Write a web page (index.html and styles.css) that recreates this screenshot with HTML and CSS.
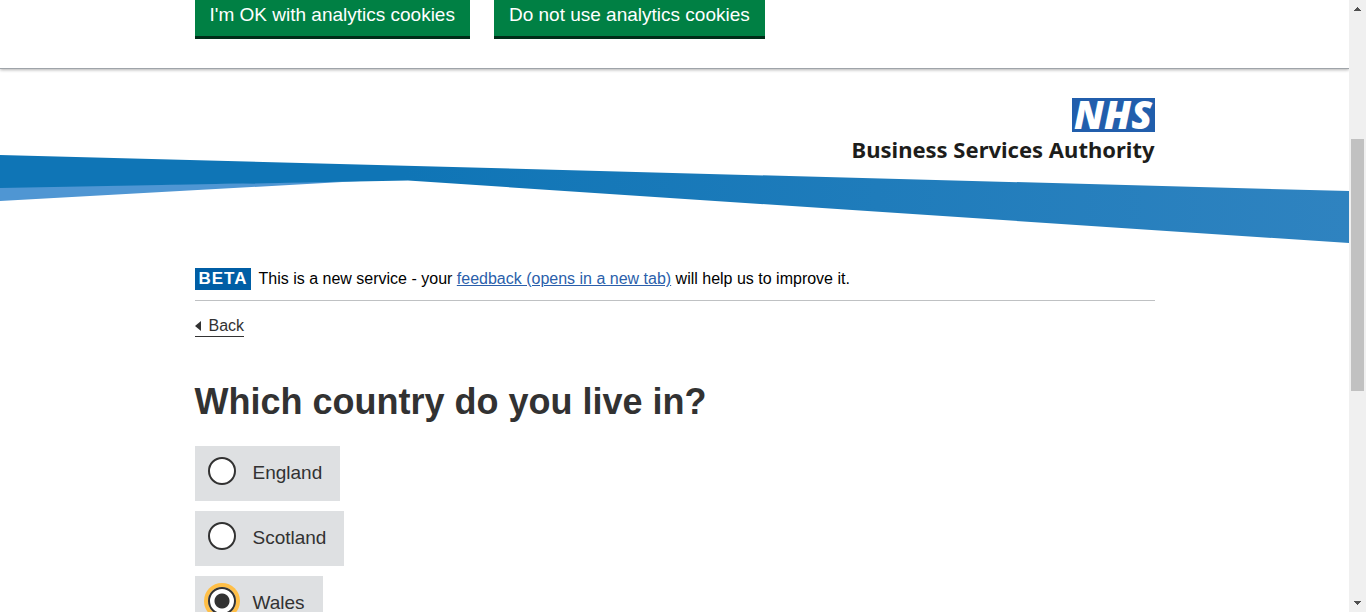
FILE: index.html
```html
<!DOCTYPE html>
<html lang="en">
<head>
<meta charset="utf-8">
<meta name="viewport" content="width=device-width, initial-scale=1">
<title>Which country do you live in?</title>
<link rel="stylesheet" href="styles.css">
</head>
<body>
<div class="window">
  <div class="page">
    <section class="cookie-banner" aria-label="Cookies">
      <div class="container cookie-actions">
        <button class="button" type="button">I'm OK with analytics cookies</button>
        <button class="button" type="button">Do not use analytics cookies</button>
      </div>
    </section>
    <header class="header">
      <svg class="swoosh" viewBox="0 0 1349 88" preserveAspectRatio="none" aria-hidden="true">
        <defs>
          <linearGradient id="band" x1="0" x2="1" y1="0" y2="0">
            <stop offset="0.3" stop-color="#0f75b6"/>
            <stop offset="1" stop-color="#2f83c0"/>
          </linearGradient>
        </defs>
        <path fill="#4f96d3" d="M0 32L360 26L0 46Z"/>
        <path fill="url(#band)" d="M0 0L1349 36V88L408 25.500L330 27L0 33Z"/>
      </svg>
      <div class="container brand">
        <svg class="nhs" viewBox="0 0 83 34" role="img" aria-label="NHS">
          <rect width="83" height="34" fill="#215eac"/>
          <text class="nhs-text" x="41" y="31" text-anchor="middle">NHS</text>
        </svg>
        <span class="brand-name">Business Services Authority</span>
      </div>
    </header>
    <main class="container">
      <div class="phase-banner">
        <strong class="tag">BETA</strong>
        <span>This is a new service - your <a class="link" href="#feedback">feedback (opens in a new tab)</a> will help us to improve it.</span>
      </div>
      <a class="back" href="#back"><svg class="back-arrow" viewBox="0 0 6 10" aria-hidden="true"><path d="M6 0V10L0 5Z"/></svg>Back</a>
      <form>
        <fieldset class="fieldset">
          <legend class="legend"><h1 class="title">Which country do you live in?</h1></legend>
          <div class="choices">
            <label class="choice"><input class="radio" type="radio" name="country" value="england">England</label>
            <label class="choice"><input class="radio" type="radio" name="country" value="scotland">Scotland</label>
            <label class="choice"><input class="radio radio-focused" type="radio" name="country" value="wales" checked>Wales</label>
          </div>
        </fieldset>
      </form>
    </main>
  </div>
  <div class="scrollbar" aria-hidden="true">
    <svg class="scroll-arrow" viewBox="0 0 7 4"><path d="M3 0H4V1H5V2H6V3H7V4H0V3H1V2H2V1H3Z"/></svg>
    <div class="track"><div class="thumb"></div></div>
    <svg class="scroll-arrow" viewBox="0 0 7 4"><path d="M0 0H7V1H6V2H5V3H4V4H3V3H2V2H1V1H0Z"/></svg>
  </div>
</div>
</body>
</html>
```
FILE: styles.css
```css
* {
  box-sizing: border-box;
}

body {
  margin: 0;
  background: #fff;
  color: #000;
  font-family: "Liberation Sans", Arial, sans-serif;
  font-size: 16px;
  line-height: 20px;
}

.window {
  display: flex;
  height: 100vh;
  overflow: hidden;
}

.page {
  flex: 1;
  min-width: 0;
  overflow: hidden;
}

.container {
  max-width: 960px;
  margin: 0 auto;
}

.cookie-banner {
  padding-bottom: 29px;
  border-bottom: 1px solid #9fa4a9;
  box-shadow: 0 1px 3px rgba(0, 0, 0, 0.3);
}

.cookie-actions {
  display: flex;
  gap: 24px;
}

.button {
  padding: 4px 15px 11px;
  border: 0;
  border-bottom: 3px solid #002d18;
  background: #008044;
  color: #fff;
  font-family: inherit;
  font-size: 19px;
  line-height: 21px;
}

.header {
  position: relative;
  height: 174px;
  padding-top: 29px;
}

.swoosh {
  position: absolute;
  left: 0;
  bottom: 0;
  width: 100%;
  height: 88px;
}

.brand {
  position: relative;
  display: flex;
  flex-direction: column;
  align-items: flex-end;
  gap: 4px;
}

.nhs {
  width: 83px;
  height: 34px;
  overflow: visible;
}

.nhs-text {
  fill: #fff;
  font-family: "Open Sans", sans-serif;
  font-size: 38px;
  font-style: italic;
  font-weight: 800;
}

.brand-name {
  color: #1d1d1b;
  font-family: "Noto Sans", sans-serif;
  font-size: 22px;
  font-weight: 700;
  line-height: 26px;
}

.phase-banner {
  display: flex;
  align-items: center;
  gap: 8px;
  margin-top: 25px;
  padding-bottom: 10px;
  border-bottom: 1px solid #bfc1c3;
}

.tag {
  padding: 1px 3px 1px 4px;
  background: #005ea5;
  color: #fff;
  font-size: 17px;
  letter-spacing: 1px;
}

.link {
  color: #2b5fab;
}

.back {
  display: inline-flex;
  align-items: center;
  gap: 8px;
  margin-top: 15px;
  border-bottom: 1px solid #323232;
  color: #323232;
  text-decoration: none;
}

.back-arrow {
  width: 6px;
  height: 10px;
  fill: #323232;
}

.fieldset {
  margin: 0;
  padding: 0;
  border: 0;
}

.legend {
  padding: 0;
}

.title {
  margin: 45px 0 24px;
  color: #323232;
  font-size: 36px;
  line-height: 40px;
}

.choices {
  display: flex;
  flex-direction: column;
  align-items: flex-start;
  gap: 10px;
}

.choice {
  display: flex;
  align-items: flex-start;
  gap: 17px;
  padding: 11px 18px 12px 13px;
  background: #dee0e2;
  color: #323232;
  font-size: 19px;
  line-height: 32px;
}

.radio {
  appearance: none;
  width: 28px;
  height: 28px;
  margin: 0;
  border: 2px solid #323232;
  border-radius: 50%;
  background: #fff;
}

.radio:checked {
  background: radial-gradient(circle, #323232 7px, #fff 8px);
}

.radio-focused {
  box-shadow: 0 0 0 4px #ffbf47;
}

.scrollbar {
  display: flex;
  flex-direction: column;
  align-items: center;
  width: 17px;
  padding: 7px 0;
  background: #f0f0f0;
}

.scroll-arrow {
  width: 7px;
  height: 4px;
  fill: #505050;
}

.track {
  flex: 1;
  padding-top: 128px;
}

.thumb {
  width: 13px;
  height: 252px;
  background: #c1c1c1;
}
```
